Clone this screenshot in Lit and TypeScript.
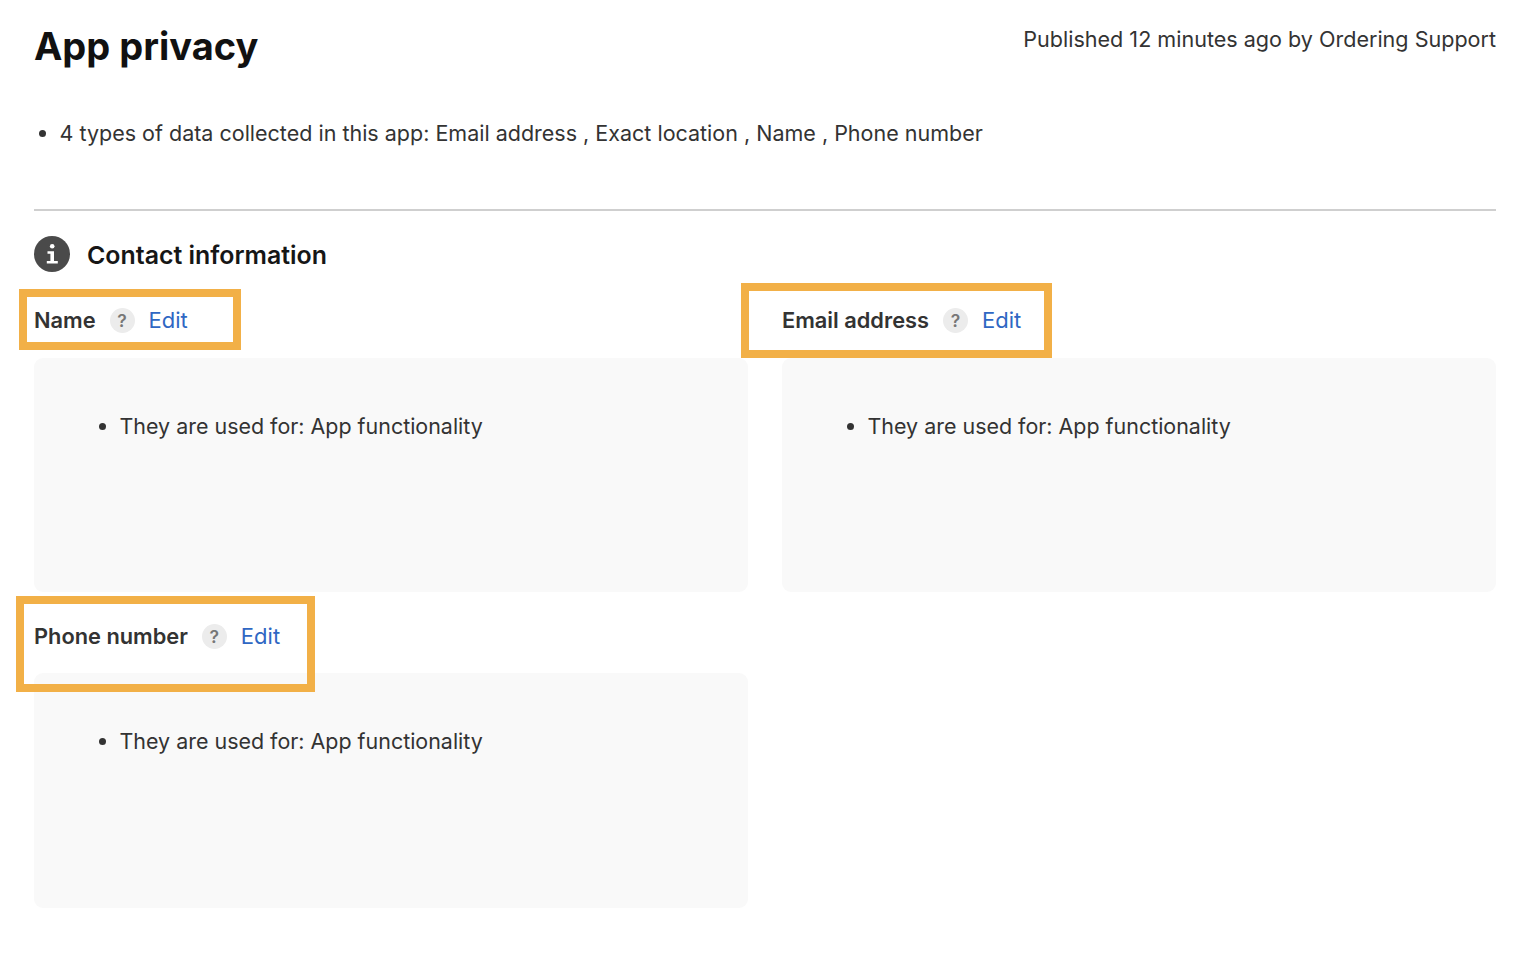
import { LitElement, html, css, svg } from "lit";
import { customElement } from "lit/decorators.js";

const items = [
  { name: "Name", box: "b1" },
  { name: "Email address", box: "b2" },
  { name: "Phone number", box: "b3" },
];

@customElement("app-root")
export class AppRoot extends LitElement {
  static styles = css`
    :host { display: block; position: relative; width: 1540px; height: 966px; background: #fff; overflow: hidden;
      font-family: Inter, "Liberation Sans", sans-serif; color: #2b2b2b; }
    .page { padding: 23px 44px 0 34px; display: flex; flex-direction: column; }
    .top { display: flex; justify-content: space-between; align-items: flex-start; }
    h1 { margin: 0; font-size: 38px; line-height: 46px; font-weight: 700; color: #111; }
    .pub { font-size: 21.55px; line-height: 30px; margin-top: 1px; color: #333; }
    .summary { margin: 49px 0 0; padding: 0 0 0 25.5px; font-size: 21.5px; line-height: 30px; color: #333; }
    hr { border: 0; border-top: 2px solid #cfcfcf; margin: 61px 0 0; }
    .sec { display: flex; align-items: center; gap: 17px; margin-top: 25px; height: 36px; }
    .sec svg { width: 36px; height: 36px; display: block; }
    h2 { margin: 0; padding-top: 1px; font-size: 24.9px; font-weight: 600; color: #161616; line-height: 36px; }
    .grid { display: grid; grid-template-columns: 714px 714px; column-gap: 34px; }
    .head { display: flex; align-items: center; height: 36px; margin-top: 30px; margin-bottom: 20px; }
    .col:nth-child(n+3) .head { margin-top: 26px; margin-bottom: 19px; }
    .label { font-size: 21.8px; font-weight: 600; color: #333; line-height: 30px; }
    .q { width: 25px; height: 25px; border-radius: 50%; background: #ececec; color: #777; font-size: 17.5px; font-weight: 600;
      display: flex; align-items: center; justify-content: center; margin: 0 14px; }
    .edit { font-size: 22px; color: #2f67c3; line-height: 30px; text-decoration: none; }
    .card { height: 234px; background: #f9f9f9; border-radius: 9px; box-sizing: border-box; padding: 53px 0 0 0; }
    .col:nth-child(n+3) .card { height: 235px; }
    .card ul { margin: 0; padding: 0 0 0 85.5px; font-size: 21.45px; line-height: 30px; color: #333; }
    .box { position: absolute; border: 8px solid #f2b047; box-sizing: border-box; }
    .b1 { left: 19px; top: 289px; width: 222px; height: 61px; }
    .b2 { left: 741px; top: 283px; width: 311px; height: 75px; }
    .b3 { left: 16px; top: 596px; width: 299px; height: 96px; }
  `;

  render() {
    return html`
      <div class="page">
        <div class="top">
          <h1>App privacy</h1>
          <div class="pub">Published 12 minutes ago by Ordering Support</div>
        </div>
        <ul class="summary">
          <li>4 types of data collected in this app: Email address , Exact location , Name , Phone number</li>
        </ul>
        <hr />
        <div class="sec">
          <svg viewBox="0 0 36 36">
            ${svg`<circle cx="18" cy="18" r="18" fill="#4a4a4a"></circle>
            <circle cx="18.2" cy="10.2" r="2.3" fill="#fff"></circle>
            <path d="M13.5 15.2h6.5v9.8h3.8v2.5h-11v-2.5h3.6v-7.3h-2.9z" fill="#fff"></path>`}
          </svg>
          <h2>Contact information</h2>
        </div>
        <div class="grid">
          ${items.map(
            (i) => html`<div class="col">
              <div class="head">
                <span class="label">${i.name}</span>
                <span class="q">?</span>
                <a class="edit">Edit</a>
              </div>
              <div class="card"><ul><li>They are used for: App functionality</li></ul></div>
            </div>`
          )}
        </div>
      </div>
      ${items.map((i) => html`<div class="box ${i.box}"></div>`)}
    `;
  }
}
